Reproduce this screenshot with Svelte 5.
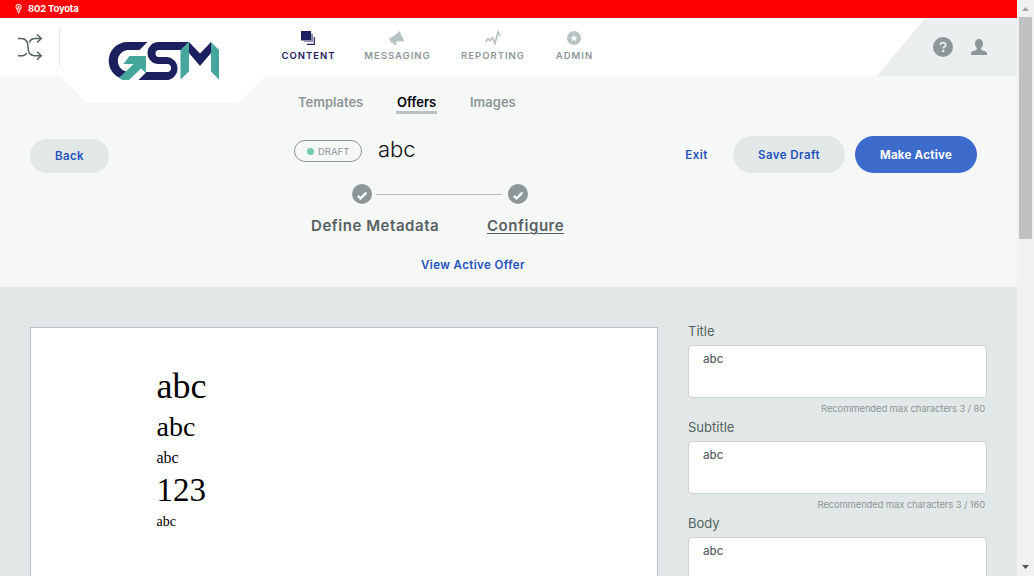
<script>
  const nav = [
    { label: 'CONTENT', icon: 'content', w: 54 },
    { label: 'MESSAGING', icon: 'messaging', w: 66 },
    { label: 'REPORTING', icon: 'reporting', w: 65 },
    { label: 'ADMIN', icon: 'admin', w: 38 }
  ];
  const fields = [
    { label: 'Title', value: 'abc', max: 80 },
    { label: 'Subtitle', value: 'abc', max: 160 },
    { label: 'Body', value: 'abc' }
  ];
</script>

{#snippet check()}
  <svg class="check" width="20" height="20" viewBox="0 0 20 20">
    <circle cx="10" cy="10" r="10" fill="#8d9798" />
    <path d="M5.800 11.800 8.600 14.400 14.400 8.500" fill="none" stroke="#fff" stroke-width="2.300" />
  </svg>
{/snippet}

<div class="window">
  <div class="page">
    <div class="store">
      <svg width="8" height="10" viewBox="0 0 8 10"><path d="M1 3a2.600 2.600 0 0 1 5.200 0c0 1.200-.8 2-2.600 2S1 4.200 1 3zM2 5.500l1.600 3.200 1.600-3.200" fill="none" stroke="#ffd9d9" stroke-width="1.100" /><circle cx="3.600" cy="3" r="1" fill="#fff" /></svg>
      <span>802 Toyota</span>
    </div>

    <header>
      <div class="shuffle">
        <svg width="26" height="28" viewBox="0 0 26 28" fill="none" stroke="#566163" stroke-width="1.500">
          <path d="M1 5.500h3c5 0 7 3 7 8.500s2 8.800 7 8.800h6M1 22.800h3c3 0 4.700-1 5.700-3M12.300 9.500c1-2.700 2.700-4 5.700-4h6M20 1.500l4.300 4-4.300 4M20 18.800l4.300 4-4.300 4" />
        </svg>
      </div>
      <div class="brand">
        <svg width="205" height="85" viewBox="60 18 205 85">
          <path d="M60 76 88 103H238L265 76V18H60z" fill="#fff" />
          <path d="M147.500 42H127a18.800 18.800 0 0 0-7.500 35.800L126 71.500a11 11 0 0 1 1-21.500h12.500z" fill="#1c205f" />
          <path d="M129.500 56H146V73l-5-4.500L129 80h-6.500l-3.500-2L133.500 64H123.500z" fill="#45a69c" />
          <path d="M189 42H158.500a11 11 0 0 0 0 22H167a4 4 0 0 1 0 8H146.500L138.500 80H166a11.500 11.500 0 0 0 0-23H159a3.500 3.500 0 0 1 0-7H181z" fill="#1c205f" />
          <path d="M180.500 50 189 42V71.500L180.500 79.500zM211 42 219 50V79.500L211 71.500z" fill="#45a69c" />
          <path d="M189 42 200 53.500 211 42V53L200 66 189 53z" fill="#1c205f" />
        </svg>
      </div>
      <nav>
        {#each nav as item, i}
          <a class:active={i === 0} style:width="{item.w}px">
            <svg width="18" height="16" viewBox="0 0 18 16">
              {#if item.icon === 'content'}
                <path d="M2 1h10v9.500H2z" fill="#1c205f" />
                <path d="M13 4v7.500H5M15.300 7v7.300H8" fill="none" stroke="#1c205f" stroke-width="1.200" />
                <path d="M12 3.500h1.500V12H5v-1.500h7z" fill="#8b8daf" />
              {:else if item.icon === 'messaging'}
                <path d="M1.200 8.500C4 7 8 5 11.500 1L16.500 11.500C12 11 9.500 11.200 7.500 12L9 14.500 6 15 4.500 12.500 2.500 12.500z" fill="#b9c3c5" />
              {:else if item.icon === 'reporting'}
                <path d="M1.500 12 4 8.800 6 10.500 8.500 7.500 11 13.500 14 2 16.200 6" fill="none" stroke="#b9c3c5" stroke-width="1.700" />
              {:else}
                <circle cx="9" cy="8" r="7" fill="#b9c3c5" />
                <path d="m9 4.500 1 2.400 2.500.2-1.900 1.600.6 2.500L9 9.900l-2.200 1.300.6-2.500-1.900-1.600 2.500-.2z" fill="#fff" />
              {/if}
            </svg>
            <span>{item.label}</span>
          </a>
        {/each}
      </nav>
      <div class="account">
        <svg width="20" height="20" viewBox="0 0 20 20">
          <circle cx="10" cy="10" r="10" fill="#8d9798" />
          <path d="M7.500 7.900C7.500 5 12.700 5 12.700 7.700 12.700 9.800 10.200 9.500 10.200 11.600" fill="none" stroke="#ebefef" stroke-width="1.800" />
          <circle cx="10.200" cy="14" r="1.200" fill="#ebefef" />
        </svg>
        <svg width="16" height="16" viewBox="0 0 16 16">
          <path d="M8 0c2.600 0 4 1.800 4 4.500 0 2.500-1 3.600-1.700 4.500v1.700C12 12 16 11.800 16 14.500V16H0v-1.500C0 11.800 4 12 5.700 10.700V9C5 8.100 4 7 4 4.500 4 1.800 5.400 0 8 0z" fill="#8d9798" />
        </svg>
      </div>
    </header>

    <section class="top">
      <div class="tabs">
        <a>Templates</a>
        <a class="current">Offers</a>
        <a>Images</a>
      </div>
      <div class="toolbar">
        <button class="pill back">Back</button>
        <div class="status"><i></i><span>DRAFT</span></div>
        <h1>abc</h1>
        <button class="exit">Exit</button>
        <button class="pill save">Save Draft</button>
        <button class="pill primary">Make Active</button>
      </div>
      <div class="track">
        {@render check()}
        <div class="line"></div>
        {@render check()}
      </div>
      <div class="steps">
        <span class="define">Define Metadata</span>
        <span class="configure">Configure</span>
      </div>
      <a class="view">View Active Offer</a>
    </section>

    <main>
      <article>
        <p class="p1">abc</p>
        <p class="p2">abc</p>
        <p class="p3">abc</p>
        <p class="p4">123</p>
        <p class="p5">abc</p>
      </article>
      <form>
        {#each fields as f}
          <div class="field">
            <div class="label">{f.label}</div>
            <div class="box">{f.value}</div>
            {#if f.max}
              <div class="hint">Recommended max characters {f.value.length} / {f.max}</div>
            {/if}
          </div>
        {/each}
      </form>
    </main>
  </div>

  <div class="scroll">
    <svg width="17" height="17" viewBox="0 0 17 17"><path d="M5 11 8.500 7 12 11z" fill="#a3a3a3" /></svg>
    <div class="thumb"></div>
    <svg class="down" width="17" height="17" viewBox="0 0 17 17"><path d="M5 6 8.500 10 12 6z" fill="#505050" /></svg>
  </div>
</div>

<style>
  :global(body) { margin: 0; overflow: hidden; }
  .window { display: flex; width: 1034px; height: 576px; overflow: hidden; font-family: Inter, sans-serif; }
  .window :global(*) { box-sizing: border-box; }
  .page { width: 1017px; height: 576px; overflow: hidden; background: #f6f8f8; display: flex; flex-direction: column; }
  .store { height: 18px; flex: none; background: #f00; color: #fff; display: flex; align-items: center; gap: 5px; padding: 0 0 1px 15px; font-size: 9.500px; font-weight: 700; letter-spacing: -.2px; }
  header { height: 58px; flex: none; background: #fff; display: flex; }
  .shuffle { width: 60px; height: 38px; margin-top: 10px; border-right: 1px solid #e1e6e6; padding: 5px 0 0 17px; }
  .brand { width: 205px; height: 58px; }
  .brand svg { display: block; position: relative; z-index: 1; }
  nav { display: flex; gap: 30px; padding: 12px 0 0 16px; }
  nav a { display: flex; flex-direction: column; align-items: center; color: #8d9798; font-size: 9.500px; font-weight: 600; letter-spacing: 1px; white-space: nowrap; line-height: 12px; }
  nav a:nth-child(n + 2) { position: relative; left: -1px; }
  nav span { margin-top: 4px; margin-right: -1px; }
  nav .active { color: #1c205f; font-weight: 600; }
  .account { width: 140px; margin-left: auto; background: #ebefef; clip-path: polygon(48px 0, 100% 0, 100% 100%, 0 100%); display: flex; align-items: center; gap: 18px; padding-left: 56px; }
  .top { height: 211px; flex: none; }
  .tabs { display: flex; padding: 17px 0 0 298px; height: 60px; font-size: 13px; font-weight: 600; color: #8d9798; line-height: 19px; }
  .tabs a { height: 21px; width: 65px; white-space: nowrap; }
  .tabs .current { width: 41px; margin: 0 33px 0 33px; color: #000; border-bottom: 3px solid #b9c3c5; padding-left: 1px; }
  .toolbar { display: flex; align-items: center; height: 37px; padding-left: 30px; }
  button { border: 0; background: none; font: 600 11.500px Inter, sans-serif; color: #2450bd; letter-spacing: .42px; padding: 0; white-space: nowrap; }
  .pill { border-radius: 19px; background: #e2e8e8; height: 37px; }
  .back { width: 79px; height: 34px; margin-top: 3px; }
  .status { width: 68px; height: 22px; margin: -7px 0 0 185px; border: 1px solid #8d9798; border-radius: 11px; display: flex; align-items: center; gap: 4px; padding-left: 12px; font-size: 9.500px; color: #8d9798; }
  .status i { width: 7px; height: 7px; border-radius: 50%; background: #71cbb5; }
  h1 { margin: -12px 0 0 16px; width: 60px; font: 300 22px Inter, sans-serif; color: #111; }
  .exit { margin-left: auto; width: 23px; }
  .save { width: 112px; margin-left: 25px; }
  .primary { width: 122px; margin: 0 40px 0 10px; background: #3c6bcb; color: #fff; font-weight: 700; letter-spacing: .25px; }
  .track { display: flex; align-items: center; margin: 11px 0 0 352px; height: 20px; }
  .line { width: 126px; height: 1px; background: #b0babb; margin: 1px 6px 0 4px; }
  .steps { display: flex; padding: 12px 0 0 311px; font-size: 15px; line-height: 20px; font-weight: 600; color: #566163; white-space: nowrap; letter-spacing: .55px; }
  .define { width: 176px; }
  .configure { text-decoration: underline; text-underline-offset: 2px; text-decoration-thickness: 1px; }
  .view { display: block; margin: 21px 0 0 421px; color: #2450bd; font-size: 11.500px; font-weight: 600; line-height: 16px; letter-spacing: .4px; }
  main { flex: 1; min-height: 0; background: #e2e8e8; display: flex; padding: 40px 30px 0; }
  article { width: 628px; height: 400px; flex: none; background: #fff; border: 1px solid #b9c3c5; padding: 37px 0 0 125.500px; font-family: "Liberation Serif", serif; color: #000; }
  p { margin: 0; }
  .p1 { font-size: 36px; line-height: 42px; }
  .p2 { font-size: 28px; line-height: 40px; }
  .p3 { font-size: 16px; line-height: 21px; }
  .p4 { font-size: 33px; line-height: 45px; }
  .p5 { font-size: 14px; line-height: 18px; }
  form { margin: -5px 0 0 30px; width: 299px; }
  .field { height: 96px; color: #566163; }
  .label { font-size: 13px; line-height: 19px; height: 23px; }
  .box { height: 53px; background: #fff; border: 1px solid #cbd2d4; border-radius: 4px; padding: 6px 14px; font-size: 11.500px; font-weight: 500; line-height: 15px; }
  .hint { text-align: right; padding: 4px 2px 0 0; font-size: 9.500px; letter-spacing: -.15px; line-height: 14px; color: #8d9798; white-space: nowrap; }
  .scroll { width: 17px; height: 576px; background: #f1f1f1; display: flex; flex-direction: column; align-items: center; }
  .scroll svg { flex: none; }
  .thumb { width: 13px; height: 222px; background: #c1c1c1; }
  .down { margin-top: auto; }
</style>
